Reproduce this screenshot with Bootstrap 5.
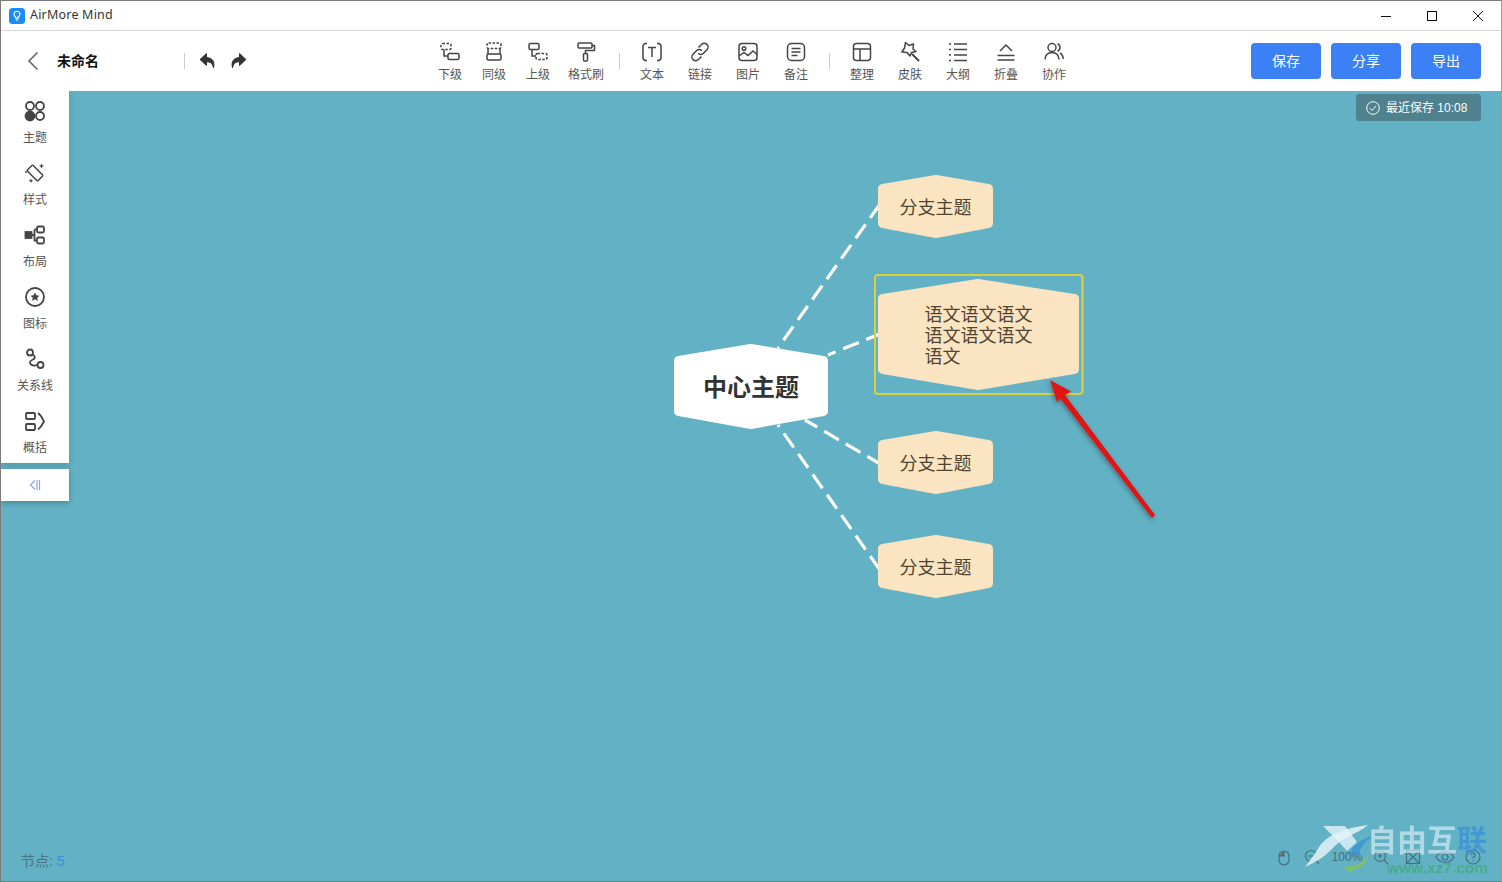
<!DOCTYPE html>
<html lang="zh-CN">
<head>
  <meta charset="UTF-8">
  <meta name="viewport" content="width=device-width, initial-scale=1.0">
  <title>AirMore Mind</title>
  <link href="https://cdn.jsdelivr.net/npm/bootstrap@5.3.0/dist/css/bootstrap.min.css" rel="stylesheet">
  <style>
    html, body { height: 100%; overflow: hidden; }
    body {
      background: #fff;
      font-family: "Liberation Sans", "Noto Sans CJK SC", sans-serif;
      color: #444;
    }
    svg { display: block; }
    .app-win { width: 1502px; height: 882px; border: 1px solid #7a7a7a; border-right-color: #9a9a9a; }

    /* title bar */
    .title-bar { height: 30px; border-bottom: 1px solid #d9d9d9; padding-left: 8px; }
    .app-name { font-family: "Noto Sans", sans-serif; font-size: 12.5px; letter-spacing: .2px; color: #333; margin-left: 5px; }
    .win-btn { width: 46px; height: 29px; }

    /* toolbar */
    .tool-bar { height: 60px; }
    .left-group { width: 427px; }
    .back-btn { margin-left: 26px; width: 30px; }
    .doc-name { width: 127px; font-size: 14px; font-weight: 700; color: #111; }
    .v-line { width: 1px; height: 16px; background: #ccc; }
    .undo-box { width: 30px; }
    .tool-item { width: 48px; padding-top: 10px; }
    .tool-item.narrow { width: 44px; }
    .tool-item span, .side-item span { font-size: 12px; line-height: 14px; color: #555; white-space: nowrap; }
    .tool-item span { margin-top: 5px; }
    .side-item span { margin-top: 9px; }
    .tool-sep { width: 18px; }
    .fmt-item { margin-left: 2px; }
    .top-btn {
      width: 70px; height: 36px; padding: 0; border: 0; border-radius: 4px;
      background: #3c80f6; color: #fff; font-size: 14px;
    }
    .top-btns { margin-right: 20px; gap: 10px; }

    /* canvas */
    .stage { height: 790px; background: #62b1c5; overflow: hidden; }
    .stage-svg { position: absolute; left: 0; top: 0; }
    .node-text { font-family: "Noto Sans CJK SC", sans-serif; font-size: 18px; fill: #50452f; }
    .node-main { font-family: "Noto Sans CJK SC", sans-serif; font-size: 24px; font-weight: 700; fill: #333; }
    .long-topic {
      position: absolute; left: 923.5px; top: 212px; width: 110px;
      font-family: "Noto Sans CJK SC", sans-serif; font-size: 18px; line-height: 21px; color: #50452f;
    }
    .side-panel { position: absolute; left: 0; top: 0; width: 68px; }
    .side-list { background: #fff; height: 372px; box-shadow: 0 2px 6px rgba(0,0,0,.18); }
    .side-item { height: 62px; padding-top: 9px; }
    .side-collapse { background: #fff; height: 32px; margin-top: 6px; box-shadow: 0 2px 6px rgba(0,0,0,.25); }
    .save-tip {
      position: absolute; right: 20px; top: 3px; width: 125px; height: 27px;
      background: #4f818e; border-radius: 3px; color: #fff; font-size: 12px; padding-left: 10px; gap: 6px;
    }
    .node-count { position: absolute; left: 20px; bottom: 11px; font-size: 14px; line-height: 18px; color: #4e7482; }
    .node-count b { font-weight: 400; color: #3f8fdc; }
    .zoom-bar { position: absolute; left: 1276px; top: 756px; width: 210px; height: 20px; }
    .zoom-num { font-size: 12px; color: #44707e; width: 36px; text-align: center; }
    .gap-13 { margin-left: 13px; }
    .gap-9 { margin-left: 9px; }
    .gap-14 { margin-left: 14px; }
    .gap-10 { margin-left: 10px; }

    /* watermark */
    .mark-logo { filter: blur(.5px); }
    .mark-name {
      position: absolute; left: 1366px; top: 733px; filter: blur(.6px);
      font-family: "Liberation Sans", "Noto Sans CJK SC", sans-serif; font-size: 30px; line-height: 34px; font-weight: 700;
      color: rgba(226,244,250,.62); white-space: nowrap;
    }
    .mark-name em { font-style: normal; color: rgba(60,145,215,.75); }
    .mark-url {
      position: absolute; left: 1386px; top: 770px; filter: blur(.5px);
      font-family: "Liberation Sans", sans-serif; font-size: 15.5px; line-height: 14px; font-weight: 700;
      color: rgba(64,170,120,.75); white-space: nowrap;
    }
  </style>
</head>
<body>
<div class="app-win d-flex flex-column">

  <div class="title-bar d-flex align-items-center">
    <svg width="16" height="16" viewBox="0 0 16 16">
      <rect width="16" height="16" rx="3.5" fill="#1c8cf5"/>
      <path d="M5 6.3a3 3 0 1 1 6 0c0 1.500-1 2.200-1.800 2.800v1H6.800v-1C6 8.500 5 7.800 5 6.300z" fill="none" stroke="#fff" stroke-width="1.100"/>
      <path d="M6.800 12h2.400" stroke="#fff" stroke-width="1.100"/>
    </svg>
    <span class="app-name">AirMore Mind</span>
    <div class="ms-auto d-flex">
      <div class="win-btn d-flex align-items-center justify-content-center"><svg width="12" height="12" viewBox="0 0 12 12"><path d="M1 6.500h10" stroke="#111"/></svg></div>
      <div class="win-btn d-flex align-items-center justify-content-center"><svg width="12" height="12" viewBox="0 0 12 12"><rect x="1.500" y="1.500" width="9" height="9" fill="none" stroke="#111"/></svg></div>
      <div class="win-btn d-flex align-items-center justify-content-center"><svg width="12" height="12" viewBox="0 0 12 12"><path d="M1 1l10 10M11 1L1 11" stroke="#111"/></svg></div>
    </div>
  </div>

  <div class="tool-bar d-flex">
    <div class="left-group d-flex align-items-center">
      <div class="back-btn"><svg width="12" height="20" viewBox="0 0 12 20"><path d="M10.500 1.500L2 10l8.500 8.500" fill="none" stroke="#666" stroke-width="1.600"/></svg></div>
      <div class="doc-name">未命名</div>
      <div class="v-line"></div>
      <div class="undo-box ms-2 d-flex justify-content-center">
        <svg width="18" height="18" viewBox="0 0 18 18"><path d="M7.500 1.500L1 7.500l6.500 6V9.800c3.500 0 5.800 1 7 6 1.500-6-1-10-7-10.300z" fill="#333" stroke="#333" stroke-linejoin="round"/></svg>
      </div>
      <div class="undo-box d-flex justify-content-center">
        <svg width="18" height="18" viewBox="0 0 18 18"><path d="M10.500 1.500l6.500 6-6.500 6V9.800c-3.500 0-5.800 1-7 6-1.500-6 1-10 7-10.300z" fill="#333" stroke="#333" stroke-linejoin="round"/></svg>
      </div>
    </div>

    <div class="d-flex">
      <div class="tool-item narrow d-flex flex-column align-items-center">
        <svg width="22" height="22" viewBox="0 0 22 22" fill="none" stroke="#444" stroke-width="1.500"><rect x="2" y="2.500" width="10" height="6" rx="1.500" stroke-dasharray="2.500 1.500"/><path d="M5 8.500v6.500h4"/><rect x="9" y="12.500" width="11" height="6" rx="1.500"/></svg>
        <span>下级</span>
      </div>
      <div class="tool-item narrow d-flex flex-column align-items-center">
        <svg width="22" height="22" viewBox="0 0 22 22" fill="none" stroke="#444" stroke-width="1.500"><rect x="4" y="2" width="14" height="5.500" rx="1.500" stroke-dasharray="2.500 1.500"/><path d="M5 7.500v5.500M17 7.500v5.500"/><rect x="4" y="13" width="14" height="6" rx="1.500"/></svg>
        <span>同级</span>
      </div>
      <div class="tool-item narrow d-flex flex-column align-items-center">
        <svg width="22" height="22" viewBox="0 0 22 22" fill="none" stroke="#444" stroke-width="1.500"><rect x="2" y="2.500" width="10" height="6" rx="1.500"/><path d="M5 8.500v6.500h4"/><rect x="9" y="12.500" width="11" height="6" rx="1.500" stroke-dasharray="2.500 1.500"/></svg>
        <span>上级</span>
      </div>
      <div class="tool-item fmt-item d-flex flex-column align-items-center">
        <svg width="22" height="22" viewBox="0 0 22 22" fill="none" stroke="#444" stroke-width="1.500"><rect x="3" y="2" width="14" height="5" rx="1"/><path d="M17 4.500h2.500v5H10.500v3"/><rect x="8.500" y="12.500" width="4" height="7.500" rx="1"/></svg>
        <span>格式刷</span>
      </div>
      <div class="tool-sep d-flex align-items-center justify-content-center"><div class="v-line"></div></div>
      <div class="tool-item d-flex flex-column align-items-center">
        <svg width="22" height="22" viewBox="0 0 22 22" fill="none" stroke="#444" stroke-width="1.500"><path d="M6 2.500H5c-1.800 0-3 1.200-3 3v11c0 1.800 1.200 3 3 3h1M16 2.500h1c1.800 0 3 1.200 3 3v11c0 1.800-1.200 3-3 3h-1M7 6.500h8M11 6.500V16"/></svg>
        <span>文本</span>
      </div>
      <div class="tool-item d-flex flex-column align-items-center">
        <svg width="22" height="22" viewBox="0 0 22 22" fill="none" stroke="#444" stroke-width="1.500"><path d="M9.500 6.500l3-3a3.800 3.800 0 0 1 5.500 5.300l-3.500 3.500a3.800 3.800 0 0 1-5.300 0"/><path d="M12.500 15.500l-3 3A3.800 3.800 0 0 1 4 13.200l3.500-3.500a3.800 3.800 0 0 1 5.300 0"/></svg>
        <span>链接</span>
      </div>
      <div class="tool-item d-flex flex-column align-items-center">
        <svg width="22" height="22" viewBox="0 0 22 22" fill="none" stroke="#444" stroke-width="1.500"><rect x="2" y="2.500" width="18" height="17" rx="3"/><circle cx="7" cy="7.500" r="1.800"/><path d="M2 15l5-3.500 4 3 5-4.500 4 3.500"/></svg>
        <span>图片</span>
      </div>
      <div class="tool-item d-flex flex-column align-items-center">
        <svg width="22" height="22" viewBox="0 0 22 22" fill="none" stroke="#444" stroke-width="1.500"><rect x="2.500" y="2.500" width="17" height="17" rx="4"/><path d="M6.500 7.500h9M6.500 11h9M6.500 14.500h6"/></svg>
        <span>备注</span>
      </div>
      <div class="tool-sep d-flex align-items-center justify-content-center"><div class="v-line"></div></div>
      <div class="tool-item d-flex flex-column align-items-center">
        <svg width="22" height="22" viewBox="0 0 22 22" fill="none" stroke="#444" stroke-width="1.500"><rect x="2.500" y="2.500" width="17" height="17" rx="3"/><path d="M2.500 8h17M9 8v11.500"/></svg>
        <span>整理</span>
      </div>
      <div class="tool-item d-flex flex-column align-items-center">
        <svg width="22" height="22" viewBox="0 0 22 22" fill="none" stroke="#444" stroke-width="1.500"><path d="M6.500 1.500l3.500 3 4.500-1.500-.5 5 3 2.500-4.500 1-1.500 3.500-3-3.500-5-.5 2.500-4z" stroke-linejoin="round"/><path d="M13 13l7 7" stroke-width="2"/></svg>
        <span>皮肤</span>
      </div>
      <div class="tool-item d-flex flex-column align-items-center">
        <svg width="22" height="22" viewBox="0 0 22 22" fill="none" stroke="#444" stroke-width="1.500"><path d="M7 3h13M7 8.500h13M7 14h13M7 19.500h13M2 3h2M2 8.500h2M2 14h2M2 19.500h2"/></svg>
        <span>大纲</span>
      </div>
      <div class="tool-item d-flex flex-column align-items-center">
        <svg width="22" height="22" viewBox="0 0 22 22" fill="none" stroke="#444" stroke-width="1.500"><path d="M5 10l6-6 6 6M2.500 14.500h17M2.500 19h17"/></svg>
        <span>折叠</span>
      </div>
      <div class="tool-item d-flex flex-column align-items-center">
        <svg width="22" height="22" viewBox="0 0 22 22" fill="none" stroke="#444" stroke-width="1.500"><circle cx="9" cy="6.500" r="4"/><path d="M2 18.500c.3-4.500 3-7 7-7s6.700 2.500 7 7M14.500 2.800a4 4 0 0 1 0 7.400M17 12c2 1 3 3.300 3.200 6"/></svg>
        <span>协作</span>
      </div>
    </div>

    <div class="top-btns ms-auto d-flex align-items-center">
      <button class="btn top-btn" type="button">保存</button>
      <button class="btn top-btn" type="button">分享</button>
      <button class="btn top-btn" type="button">导出</button>
    </div>
  </div>

  <div class="stage position-relative">
    <!-- viewBox uses window coordinates -->
    <svg class="stage-svg" width="1500" height="790" viewBox="1 91 1500 790">
      <defs>
        <filter id="arrowShade" x="-20%" y="-20%" width="150%" height="150%">
          <feDropShadow dx="-1" dy="2" stdDeviation="2" flood-color="#333" flood-opacity=".5"/>
        </filter>
      </defs>
      <!-- drawn from the branch end so a full dash touches the topic -->
      <g stroke="#fff" stroke-width="3.200" stroke-dasharray="17 8" fill="none">
        <path d="M880 204L778 348"/>
        <path d="M882 333L828 355"/>
        <path d="M882 465L805 420"/>
        <path d="M880 570L778 425"/>
      </g>

      <polygon points="679,361 751,349 823,361 823,411 751,424 679,411" fill="#fff" stroke="#fff" stroke-width="10" stroke-linejoin="round"/>
      <text class="node-main" x="751" y="396" text-anchor="middle">中心主题</text>

      <g fill="#fbe4c1" stroke="#fbe4c1" stroke-width="10" stroke-linejoin="round">
        <polygon points="883,189 936,180 988,189 988,223 936,233 883,223"/>
        <polygon points="883,299 978,284 1074,299 1074,369 978,385 883,369"/>
        <polygon points="883,445 936,436 988,445 988,479 936,489 883,479"/>
        <polygon points="883,549 936,540 988,549 988,583 936,593 883,583"/>
      </g>
      <rect x="875" y="275" width="207.500" height="119" rx="3" fill="none" stroke="#dbd13f" stroke-width="2"/>

      <text class="node-text" x="935.500" y="214" text-anchor="middle">分支主题</text>
      <text class="node-text" x="935.500" y="470" text-anchor="middle">分支主题</text>
      <text class="node-text" x="935.500" y="574" text-anchor="middle">分支主题</text>

      <polygon points="1155,515 1152,518 1060.500,398.500 1057,402 1050,380 1071,391.500 1065,395" fill="#e01212" filter="url(#arrowShade)"/>
    </svg>
    <div class="long-topic">语文语文语文语文语文语文语文</div>

    <div class="side-panel">
      <div class="side-list">
        <div class="side-item d-flex flex-column align-items-center">
          <svg width="22" height="22" viewBox="0 0 22 22" fill="none" stroke="#444" stroke-width="1.800"><circle cx="6" cy="6" r="4"/><circle cx="16" cy="6" r="4"/><circle cx="6" cy="16" r="4.500" fill="#444"/><circle cx="16" cy="16" r="4"/></svg>
          <span>主题</span>
        </div>
        <div class="side-item d-flex flex-column align-items-center">
          <svg width="22" height="22" viewBox="0 0 22 22" fill="none" stroke="#444" stroke-width="1.500"><rect x="3.500" y="7" width="15" height="8" rx="1" transform="rotate(45 11 11)"/><path d="M17.500 1.500l.8 1.700 1.700.8-1.700.8-.8 1.700-.8-1.700-1.700-.8 1.700-.8zM7 16.500l.7 1.500 1.500.7-1.500.7-.7 1.500-.7-1.500-1.500-.7 1.500-.7z" fill="#444" stroke="none"/><circle cx="2" cy="10" r=".9" fill="#444" stroke="none"/></svg>
          <span>样式</span>
        </div>
        <div class="side-item d-flex flex-column align-items-center">
          <svg width="22" height="22" viewBox="0 0 22 22" fill="none" stroke="#444" stroke-width="1.800"><rect x="1.500" y="8" width="6" height="6" fill="#444"/><path d="M7.500 11h3M10.500 5.500v11h2M10.500 5.500h2"/><rect x="13" y="2.500" width="7" height="6" rx="1.500"/><rect x="13" y="13.500" width="7" height="6" rx="1.500"/></svg>
          <span>布局</span>
        </div>
        <div class="side-item d-flex flex-column align-items-center">
          <svg width="22" height="22" viewBox="0 0 22 22" fill="none" stroke="#444" stroke-width="1.800"><circle cx="11" cy="11" r="9"/><path d="M11 6.300l1.400 3 3.200.4-2.400 2.100.7 3.200-2.900-1.700-2.900 1.700.7-3.200-2.400-2.100 3.200-.4z" fill="#444" stroke="none"/></svg>
          <span>图标</span>
        </div>
        <div class="side-item d-flex flex-column align-items-center">
          <svg width="22" height="22" viewBox="0 0 22 22" fill="none" stroke="#444" stroke-width="1.800"><circle cx="6" cy="4.500" r="3"/><circle cx="16.500" cy="17" r="3"/><path d="M8.500 6.500c3 1.500 3 4 .5 5-3 1.200-4 3-2 5 1.500 1.300 4 1.200 6.500.5"/></svg>
          <span>关系线</span>
        </div>
        <div class="side-item d-flex flex-column align-items-center">
          <svg width="22" height="22" viewBox="0 0 22 22" fill="none" stroke="#444" stroke-width="1.800"><rect x="2" y="3" width="9" height="6" rx="1"/><rect x="2" y="14" width="9" height="6" rx="1"/><path d="M14 3c2 1.500 4 4 6 8.500-2 4-4 6.500-6 8"/></svg>
          <span>概括</span>
        </div>
      </div>
      <div class="side-collapse d-flex align-items-center justify-content-center">
        <svg width="12" height="12" viewBox="0 0 12 12" fill="none" stroke="#8ea2ea" stroke-width="1.200"><path d="M6 1.500L1.500 6 6 10.500M8 1v10M10.500 1v10"/></svg>
      </div>
    </div>

    <div class="save-tip d-flex align-items-center">
      <svg width="14" height="14" viewBox="0 0 14 14" fill="none" stroke="#fff"><circle cx="7" cy="7" r="6.300"/><path d="M4 7.200l2.200 2.200L10 5"/></svg>
      <span>最近保存 10:08</span>
    </div>

    <div class="node-count">节点: <b>5</b></div>

    <div class="zoom-bar d-flex align-items-center">
      <svg width="14" height="18" viewBox="0 0 14 18" fill="none" stroke="#44707e" stroke-width="1.200"><rect x="2" y="3" width="10" height="14" rx="5"/><path d="M2 8h5V3" fill="#8a5a50"/></svg>
      <svg class="gap-13" width="16" height="16" viewBox="0 0 16 16" fill="none" stroke="#44707e" stroke-width="1.200"><circle cx="7" cy="7" r="5.500"/><path d="M11 11l4 4M4.500 7h5"/></svg>
      <span class="zoom-num gap-9">100%</span>
      <svg class="ms-2" width="16" height="16" viewBox="0 0 16 16" fill="none" stroke="#44707e" stroke-width="1.200"><circle cx="7" cy="7" r="5.500"/><path d="M11 11l4 4M4.500 7h5M7 4.500v5"/></svg>
      <svg class="ms-3" width="16" height="16" viewBox="0 0 16 16" fill="none" stroke="#44707e" stroke-width="1.200"><rect x="1.500" y="1.500" width="13" height="13"/><path d="M1.500 1.500l13 13M14.500 1.500l-13 13"/></svg>
      <svg class="gap-14" width="20" height="16" viewBox="0 0 20 16" fill="none" stroke="#44707e" stroke-width="1.200"><path d="M1 8c4-7 14-7 18 0-4 7-14 7-18 0z"/><circle cx="10" cy="8" r="3"/></svg>
      <svg class="gap-10" width="16" height="16" viewBox="0 0 16 16" fill="none" stroke="#44707e" stroke-width="1.200"><circle cx="8" cy="8" r="7"/><path d="M6 6a2 2 0 1 1 3 1.800c-.7.400-1 .8-1 1.700M8 11v1.300"/></svg>
    </div>

    <!-- watermark over the status area -->
    <svg class="stage-svg mark-logo" width="1500" height="790" viewBox="1 91 1500 790">
      <path d="M1323 826h22l12 16-10 9-8-9z" fill="#e4f3f8" fill-opacity=".8"/>
      <path d="M1368 825c-12 10-26 12-36 24-8 8-14 12-27 18 6-8 10-13 14-20 10-14 28-19 49-22z" fill="#e4f3f8" fill-opacity=".85"/>
      <path d="M1349 856c2-10 12-17 24-20-7 5-13 11-15 20z" fill="#2f8fd8" fill-opacity=".65"/>
      <path d="M1345 866c8 2 18-2 24-12-2 9-10 17-22 17z" fill="#8cc63f" fill-opacity=".7"/>
    </svg>
    <div class="mark-name">自由互<em>联</em></div>
    <div class="mark-url">www.xz7.com</div>
  </div>
</div>
<script src="https://cdn.jsdelivr.net/npm/bootstrap@5.3.0/dist/js/bootstrap.bundle.min.js"></script>
</body>
</html>
